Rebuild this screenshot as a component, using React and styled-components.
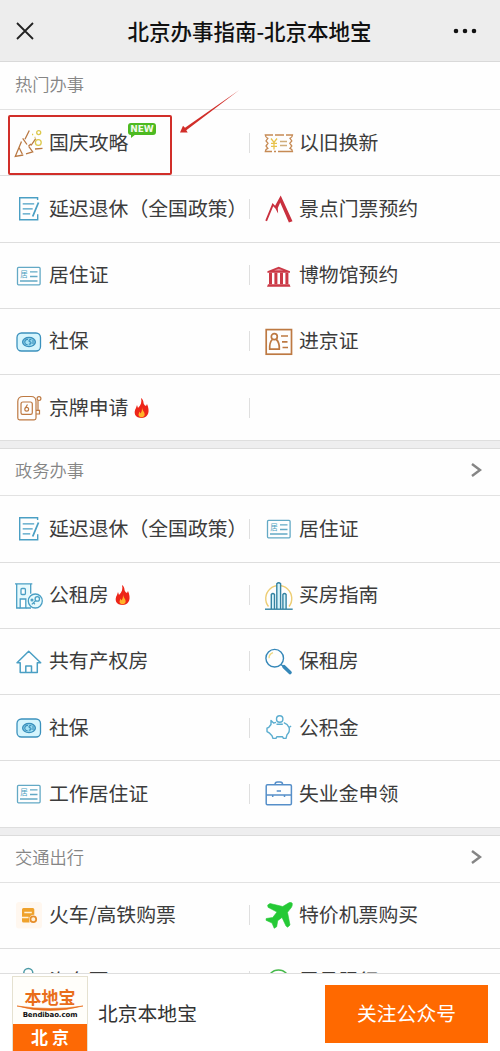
import React from "react";
import styled, { createGlobalStyle } from "styled-components";

const GlobalStyle = createGlobalStyle`
  * {
    box-sizing: border-box;
  }

  body {
    margin: 0;
    background: #fff;
    font-family: "Noto Sans CJK SC", sans-serif;
  }
`;

const Page = styled.div`
  display: flex;
  flex-direction: column;
  width: 500px;
  height: 1051px;
  overflow: hidden;
  background: #fefefe;
`;

const NavBar = styled.header`
  display: flex;
  flex: none;
  align-items: center;
  justify-content: space-between;
  height: 62px;
  padding: 0 23px 0 15px;
  background: #ededed;
  border-bottom: 1px solid #d9d9d9;
`;

const NavTitle = styled.h1`
  margin: 0 0 0 11px;
  font-size: 21.5px;
  font-weight: 500;
  line-height: 30px;
  color: #111;
  white-space: nowrap;
`;

const Content = styled.main`
  flex: 1;
  min-height: 0;
  overflow: hidden;
`;

const Section = styled.section`
  border-bottom: ${({ $last }) => ($last ? "none" : "7px solid #eeeeef")};
`;

const SectionHead = styled.div`
  display: flex;
  align-items: center;
  justify-content: space-between;
  height: 48px;
  padding: 0 18px 4px 15px;
  border-top: 1px solid ${({ $first }) => ($first ? "transparent" : "#dcdcdc")};
  border-bottom: 1px solid #e2e2e2;
`;

const SectionTitle = styled.h2`
  margin: 0;
  font-size: 17.3px;
  font-weight: 350;
  line-height: 24px;
  color: #858585;
`;

const Row = styled.div`
  display: grid;
  grid-template-columns: 250px 250px;
  height: 66.25px;
  border-bottom: 1px solid #dedede;
`;

const Cell = styled.a`
  display: flex;
  align-items: center;
  gap: 6px;
  padding-left: 14px;
  background: linear-gradient(#dfdfdf, #dfdfdf) right center / ${({ $divided }) => ($divided ? "1px" : "0")} 20px no-repeat;
`;

const Label = styled.span`
  position: relative;
  margin-bottom: 2px;
  font-size: 19.85px;
  line-height: 28px;
  color: #3c3c3c;
  white-space: nowrap;
`;

const Icon = styled.svg`
  flex: none;
  display: block;
  overflow: visible;
  fill: none;
`;

const NewBadge = styled.span`
  position: absolute;
  left: 79px;
  top: -5px;
  width: 28px;
  height: 12px;
  border-radius: 3px;
  background: #4dba21;
  font: bold 9px/12px "DejaVu Sans", sans-serif;
  text-align: center;
  color: #f3fbe9;

  &::after {
    content: "";
    position: absolute;
    left: 3px;
    top: 11px;
    border-top: 4px solid #4dba21;
    border-right: 5px solid transparent;
  }
`;

const Highlight = styled.div`
  position: absolute;
  left: 8px;
  top: 115px;
  width: 164px;
  height: 60px;
  border: 2px solid #d12e29;
  border-radius: 2px;
`;

const Arrow = styled.svg`
  position: absolute;
  left: 178px;
  top: 88px;
`;

const FollowBar = styled.footer`
  display: flex;
  flex: none;
  align-items: center;
  height: 78px;
  padding: 2px 12px 0;
  background: #fff;
  border-top: 1px solid #dedede;
`;

const Logo = styled.div`
  width: 76px;
  height: 76px;
  border: 1px solid #e5e1d0;
  border-bottom: 0;
  text-align: center;
`;

const LogoTop = styled.div`
  height: 47px;
  padding-top: 10px;
  background: #fffefa;
`;

const LogoName = styled.div`
  height: 20px;
  font-size: 17px;
  font-weight: 700;
  line-height: 20px;
  color: #e96d19;
`;

const LogoSwoosh = styled.svg`
  display: block;
  margin: -2px auto 0;
`;

const LogoDomain = styled.div`
  font: bold 7px/7px "DejaVu Sans", sans-serif;
  letter-spacing: -0.1px;
  color: #111;
`;

const LogoCity = styled.div`
  height: 28px;
  background: #fd6905;
  font-size: 17px;
  font-weight: 700;
  line-height: 26px;
  letter-spacing: 4px;
  text-indent: 4px;
  color: #fff;
`;

const AccountName = styled.span`
  margin: 0 0 2px 10px;
  font-size: 19.8px;
  line-height: 28px;
  color: #333;
`;

const FollowButton = styled.button`
  width: 163px;
  height: 58px;
  margin-left: auto;
  padding: 0 0 2px;
  border: 0;
  background: #ff6900;
  font-family: inherit;
  font-size: 19.8px;
  color: #fff;
`;

const blue = "#4a9fc4";
const brown = "#bd7942";

const icons = {
  party: (
    <g strokeWidth="1.3" stroke="#b97842">
      <path d="M7.5 13.5 1.3 28.3l8-1.3M12 25.8l6.7-2-4-5.5M13 16.5l-4.3-6.2M5 19.5 8.3 26M11 11.3l4.3-8.8M17 17.5l4.7-6.8M21 21l7.5-.6M14.5 18l2.5-2" />
      <g stroke="#dcc84b">
        <circle cx="24.7" cy="4.6" r="2" />
        <circle cx="24.3" cy="14.5" r="2.9" />
        <path d="M18 6.5h1.2M20.5 9.5h1" />
      </g>
    </g>
  ),
  coupon: (
    <g strokeWidth="1.3" stroke="#c68a54">
      <path d="M9 7H1.3q.2 2.5 2.5 3.3L2 13l2 2.2L2 18l1.8 2.3Q1.5 21 1.3 23.5H8M11 7h9M22 7h6.5q-.2 2.5-2.5 3.3l1.8 2.7-2 2.2 2 2.8-1.8 2.3q2.3.7 2.5 3.2H14M10 23.5h2" />
      <path d="M16 13.5h7M16 17.5h7" stroke="#cfad7b" />
      <path d="m7 10.5 3 4 3-4M10 14.5v7M7 15.3h6M7 18.3h6" stroke="#e8c34c" />
    </g>
  ),
  note: (
    <g stroke={blue} strokeWidth="1.4">
      <path d="M23.6 6V3.8H5.7v22h18v-5.5" />
      <path d="M8.7 9.8h11.5M8.7 14.8h10M8.7 19.8h7.5" strokeWidth="1.2" />
      <path d="m24.5 8.5-5.8 14" strokeWidth="1.8" />
    </g>
  ),
  permit: (
    <g stroke="#63a9c5" strokeWidth="1.3">
      <rect x="3.5" y="6.4" width="22.6" height="17.4" rx="1" />
      <path d="M16 10.8h7.5M16 15.5h7.5M6 20h17.5" />
      <text x="6.3" y="16.3" fontSize="7.5" fill="#4b9ec0" stroke="none">居</text>
    </g>
  ),
  social: (
    <g stroke="#3b91bd">
      <rect x="3" y="6" width="23.5" height="18" rx="4.5" strokeWidth="1.3" fill="#d5f5fd" />
      <ellipse cx="15" cy="15" rx="6.3" ry="4.6" strokeWidth="1.5" fill="#a5e3f5" />
      <path d="M14 12.3c-4-.3-4.5 5.4-.4 5.4M17.5 12.8c-3-.6-3 1.6-1.3 2.1s.6 2.7-1.4 2M19 12.4v4.6" strokeWidth="1.2" />
    </g>
  ),
  plate: (
    <g stroke={brown} strokeWidth="1.2">
      <path d="M3.8 25V8.5q0-5 5.5-5H17q5 0 5 5V25q0 1.8-1.8 1.8H5.6q-1.8 0-1.8-1.8z" />
      <path d="M7 19.7V11q0-2 2-2h7.3q2 0 2 2v8.7q0 1.6-1.6 1.6H8.6Q7 21.3 7 19.7z" />
      <circle cx="25" cy="5.6" r="1.9" />
      <path d="M24 7.5V17M22 17.3h3.5v3.7H22M13.5 11.5l-2.3 3.7" />
      <circle cx="12.7" cy="16.3" r="1.9" />
    </g>
  ),
  mountain: (
    <path fill="#c9303e" d="M1.3 26.5 8.5 9l2.6 2.8L16.7 1.5 28.5 27.3l-3.6 1.2L16.2 8.5l-2.4 5.5.3 5.5-2.7-5-2.2-2.2L3 27.3z" />
  ),
  museum: (
    <g fill="#cb3946">
      <path d="M14.7 5.8 26 10.2v1.6H3.4v-1.6zM4 23.3h21.5l1 2.5H3z" />
      <path d="M5 11.8h3v11.5H5zM10.4 11.8h3v11.5h-3zM16 11.8h3v11.5h-3zM21.4 11.8h3v11.5h-3z" />
      <path d="m10 9.6 4.7-1.9 4.7 1.9z" fill="#e995a0" />
    </g>
  ),
  idCard: (
    <g stroke={brown} strokeWidth="1.7">
      <rect x="2.2" y="2.6" width="25.3" height="24.6" />
      <circle cx="10.3" cy="9.7" r="3" />
      <path d="M8.3 12.5q-3 3-2.6 9.7h9.6q.3-6.7-3-9.7M17 9h7M18 14.8h5.5M18.5 20.5H24" />
    </g>
  ),
  rental: (
    <g stroke={blue} strokeWidth="1.3">
      <path fill="#e7fafd" d="M2.7 2.8V27h13V2.8z" stroke="none" />
      <path d="M1 2.8h17.3M2.7 2.8v24.2h3.5M16.7 2.8v10M12 27h5" />
      <path fill="#fff" d="M6.2 27v-9h5.6v9z" />
      <rect x="7" y="7.5" width="4.4" height="6" rx="1" fill="#fff" />
      <circle cx="21.3" cy="20" r="7" fill="#e7fafd" />
      <circle cx="23.3" cy="17.9" r="2.2" />
      <path d="m21.6 19.6-3.8 3.8M19.5 21.8l1.4 1.4" />
      <circle cx="18" cy="19" r=".9" />
    </g>
  ),
  towers: (
    <g strokeWidth="1.4">
      <path d="M4.5 25.5A13 13 0 1 1 25 25.5" stroke="#edcd74" />
      <path stroke="#3483a2" fill="#d8f4fb" d="M7.3 28V13.5q1.6-2 3.2 0V28M12.8 28V2.8q1.9-2.2 3.8 0V28M18.9 28V13.5q1.6-2 3.2 0V28" />
      <path stroke="#3483a2" d="M1 28.2h27.7" />
    </g>
  ),
  house: (
    <g stroke={blue} strokeWidth="1.5" strokeLinejoin="round">
      <path d="M3 15.7 14.7 4.2l12 11.5h-3.4v9.8H6.2v-9.8zM11.8 25.5v-6.6h5.7v6.6" />
    </g>
  ),
  search: (
    <g stroke="#3587b8">
      <circle cx="10.7" cy="11.2" r="8.8" strokeWidth="1.4" />
      <path d="m17 17.5 3 2.5" strokeWidth="1.5" />
      <path d="m20 19.7 6 5.8" strokeWidth="3.6" strokeLinecap="round" />
      <path d="M5 11.2q0-4 4-5.5" stroke="#eed77e" strokeWidth="1.3" />
    </g>
  ),
  piggy: (
    <g stroke="#5badcf" strokeWidth="1.4" strokeLinejoin="round">
      <circle cx="15.7" cy="6" r="3.2" />
      <path d="M12.5 11.3h6.3M12 9.4l-2.4.7L7 7.6v3.9L4.8 14.3 3 15.2v3.4l2.6 1.6L8 22.7l1 2.7h3l.8-1.6h5.8l.8 1.6H22l1-3.7q3.2-3 2.1-7.2-1.5-3.5-5.3-4.8M25.1 14.5l2-1.5" />
    </g>
  ),
  briefcase: (
    <g stroke="#568fc9" strokeWidth="1.5">
      <rect x="2.2" y="5.7" width="25.2" height="20" rx="1.2" />
      <path d="M11 5.5q0-2.6 2.5-2.6h2.6q2.5 0 2.5 2.6M2.2 16h25.2M8.7 16v2M20.5 16v2M12.7 12H17" />
    </g>
  ),
  train: (
    <g>
      <rect x="2" y="1" width="26" height="26.5" rx="3" fill="#fff7ef" />
      <path fill="#efa22c" d="M9.5 7h9.3q1.5 0 1.5 1.5v5.3q-5 .2-5.3 4.7l.6 3H9.5Q8 21.5 8 20V8.5Q8 7 9.5 7z" />
      <path d="M10.3 11.5h7.5M8 16.5h6.5" stroke="#fff2da" strokeWidth="1.5" />
      <circle cx="19.3" cy="18.3" r="2.9" stroke="#e78e2b" strokeWidth="1.8" fill="#fff0d7" />
    </g>
  ),
  plane: (
    <path
      fill="#25c936"
      stroke="#25c936"
      strokeWidth=".6"
      strokeLinejoin="round"
      d="M25.3 1.6q2.6-.7 3 .9.2 2-.8 3.8l-4 5 2.5 12.7-2.3 2.2L22 25l-4-8.6-4.3 3.3-1 6L10.2 27.3 8 22l-6-2.7.2-1.8 6.5-1L13 11 4 6.3 3.7 4 6 2.5l12.7 3z"
    />
  ),
  bus: <circle cx="14.3" cy="6" r="4.5" stroke="#4c9aa6" strokeWidth="1.5" />,
  metro: <circle cx="14.5" cy="14" r="11" stroke="#46b94b" strokeWidth="1.5" />,
};

const sections = [
  {
    title: "热门办事",
    rows: [
      [{ icon: "party", text: "国庆攻略", isNew: true }, { icon: "coupon", text: "以旧换新" }],
      [{ icon: "note", text: "延迟退休（全国政策）" }, { icon: "mountain", text: "景点门票预约" }],
      [{ icon: "permit", text: "居住证" }, { icon: "museum", text: "博物馆预约" }],
      [{ icon: "social", text: "社保" }, { icon: "idCard", text: "进京证" }],
      [{ icon: "plate", text: "京牌申请", hot: true }, null],
    ],
  },
  {
    title: "政务办事",
    more: true,
    rows: [
      [{ icon: "note", text: "延迟退休（全国政策）" }, { icon: "permit", text: "居住证" }],
      [{ icon: "rental", text: "公租房", hot: true }, { icon: "towers", text: "买房指南" }],
      [{ icon: "house", text: "共有产权房" }, { icon: "search", text: "保租房" }],
      [{ icon: "social", text: "社保" }, { icon: "piggy", text: "公积金" }],
      [{ icon: "permit", text: "工作居住证" }, { icon: "briefcase", text: "失业金申领" }],
    ],
  },
  {
    title: "交通出行",
    more: true,
    rows: [
      [{ icon: "train", text: "火车/高铁购票" }, { icon: "plane", text: "特价机票购买" }],
      [{ icon: "bus", text: "汽车票" }, { icon: "metro", text: "尾号限行" }],
    ],
  },
];

const Flame = () => (
  <Icon width="15" height="20" viewBox="0 0 15 20">
    <path fill="#ed2519" d="M7 0c4 3 1 6 5 8l1-2c3 7 2 13-5 14C1 20-1 15 2 10l1-3 1 3C7 7 8 4 7 0z" />
    <path fill="#ffb329" d="M8 9c0 4 3.5 5 2.5 8.5-1 2.5-6 2.5-6-1l1-3 1 2C8 13.5 8 12 8 9z" />
  </Icon>
);

const Item = ({ item, divided }) => (
  <Cell $divided={divided}>
    {item && (
      <>
        <Icon width="29" height="29" viewBox="0 0 29 29">{icons[item.icon]}</Icon>
        <Label>
          {item.text}
          {item.isNew && <NewBadge>NEW</NewBadge>}
        </Label>
        {item.hot && <Flame />}
      </>
    )}
  </Cell>
);

const App = () => (
  <Page>
    <GlobalStyle />
    <NavBar>
      <Icon width="20" height="20" viewBox="0 0 20 20">
        <path d="m2 2 16 16M18 2 2 18" stroke="#222" strokeWidth="1.8" />
      </Icon>
      <NavTitle>北京办事指南-北京本地宝</NavTitle>
      <Icon width="24" height="6" viewBox="0 0 24 6">
        <path d="M3 3h0M12 3h0M21 3h0" stroke="#111" strokeWidth="4.6" strokeLinecap="round" />
      </Icon>
    </NavBar>
    <Content>
      {sections.map((section, i) => (
        <Section key={section.title} $last={i === sections.length - 1}>
          <SectionHead $first={i === 0}>
            <SectionTitle>{section.title}</SectionTitle>
            {section.more && (
              <Icon width="12" height="16" viewBox="0 0 12 16">
                <path d="m2 2 8 6-8 6" stroke="#858585" strokeWidth="2.4" />
              </Icon>
            )}
          </SectionHead>
          {section.rows.map(([left, right], n) => (
            <Row key={n}>
              <Item item={left} divided />
              <Item item={right} />
            </Row>
          ))}
        </Section>
      ))}
    </Content>
    <FollowBar>
      <Logo>
        <LogoTop>
          <LogoName>本地宝</LogoName>
          <LogoSwoosh width="66" height="7" viewBox="0 0 66 7">
            <path d="M0 1q32 9 66 0Q34 6 0 1z" fill="#e96d19" stroke="#e96d19" strokeWidth=".6" />
          </LogoSwoosh>
          <LogoDomain>Bendibao.com</LogoDomain>
        </LogoTop>
        <LogoCity>北京</LogoCity>
      </Logo>
      <AccountName>北京本地宝</AccountName>
      <FollowButton>关注公众号</FollowButton>
    </FollowBar>
    <Highlight />
    <Arrow width="64" height="48" viewBox="0 0 64 48">
      <path fill="#d12e29" d="m2 44.4 3-6.7 2 2L61.3 2 8.3 42.2l1.4 2.3z" />
    </Arrow>
  </Page>
);

export default App;
